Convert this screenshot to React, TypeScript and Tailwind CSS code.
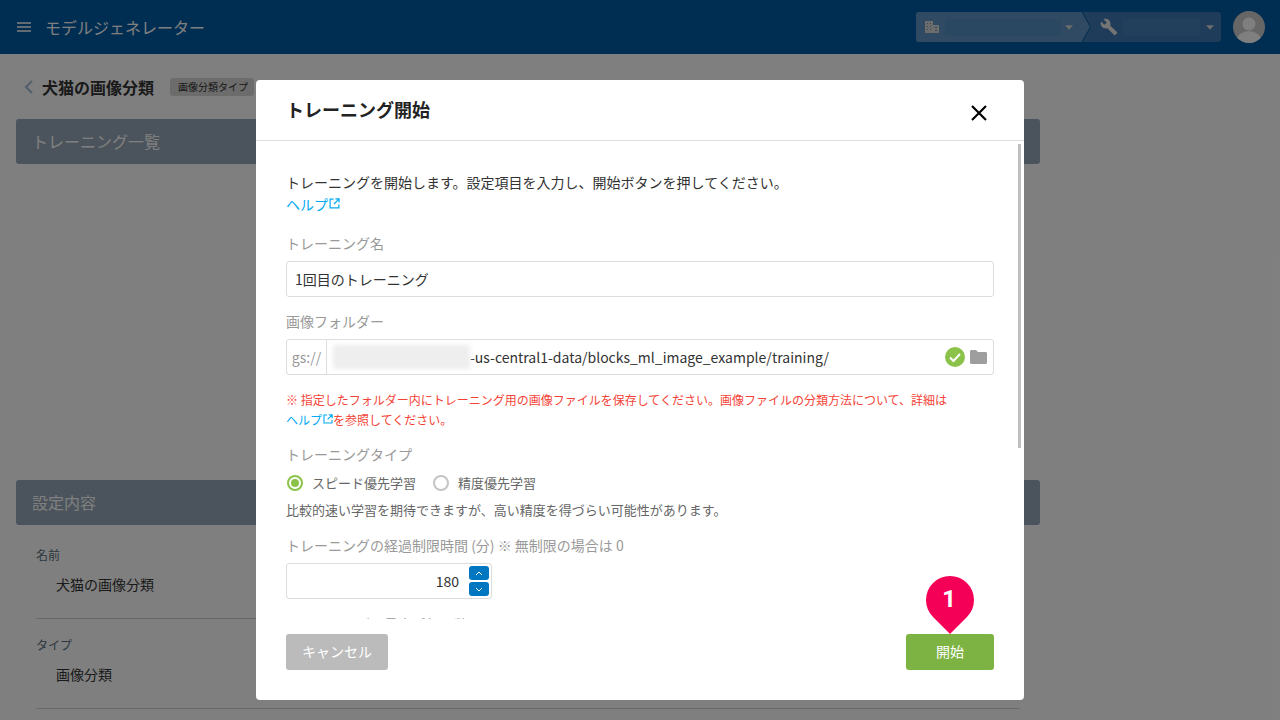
const ExternalIcon = ({ size = 11 }: { size?: number }) => (
  <svg width={size} height={size} viewBox="0 0 12 12" fill="none" stroke="#03a9f4" strokeWidth="1.3" className="ml-px inline-block align-[1px]">
    <path d="M5 1.2H1.2v9.6h9.6V7" />
    <path d="M7 1h4v4M11 1 5.500 6.500" />
  </svg>
);

const Field = ({ label, value }: { label: string; value: string }) => (
  <div className="mx-5 h-[90px] border-b border-[#d0d0d0] pt-[17px]">
    <div className="text-xs leading-[18px] text-[#5a6f80]">{label}</div>
    <div className="mt-[10px] pl-5 text-sm leading-5 text-[#333]">{value}</div>
  </div>
);

const PanelHeader = ({ title }: { title: string }) => (
  <div className="flex h-[45px] items-center rounded-[3px] bg-[#96a8b8] pb-[2px] pl-4 text-base text-white">{title}</div>
);

export default function App() {
  return (
    <div className="relative h-[720px] w-[1280px] overflow-hidden bg-white font-['Noto_Sans_CJK_JP','Noto_Sans',sans-serif]">
      <header className="flex h-[54px] items-center bg-[#005ba4] pl-[17px] pr-[15px] text-white">
        <svg width="14" height="12" viewBox="0 0 14 12" fill="none" stroke="currentColor" strokeWidth="1.4">
          <path d="M0 2h14M0 6h14M0 10h14" />
        </svg>
        <span className="ml-[14px] text-base">モデルジェネレーター</span>
        <div className="ml-auto flex h-[30px] w-[305px] overflow-hidden rounded-[3px] bg-[#3e7ab4]">
          <div className="flex w-[166px] items-center bg-[#5e94c4] pl-[9px]">
            <svg width="14" height="12" viewBox="0 0 14 12" fill="#d8d8d8">
              <path d="M0 0h8v12H0zM8 4h6v8H8z" />
              <path d="M2 2h1v1H2zM5 2h1v1H5zM2 5h1v1H2zM5 5h1v1H5zM2 8h1v1H2zM5 8h1v1H5zM10 6h2v1h-2zM10 9h2v1h-2z" fill="#5e94c4" />
            </svg>
            <div className="ml-[6px] h-[17px] w-[116px] bg-[#5490c4]" />
            <svg width="8" height="5" viewBox="0 0 9 5" fill="#d8d8d8" className="ml-[4px]">
              <path d="M0 0h9L4.500 5z" />
            </svg>
          </div>
          <svg width="10" height="30" viewBox="0 0 10 30" className="shrink-0">
            <path d="M0 0 8.500 15 0 30z" fill="#5e94c4" />
            <path d="M0 0 8.500 15 0 30" fill="none" stroke="#005ba4" strokeWidth="1" />
          </svg>
          <div className="flex flex-1 items-center pl-[8px]">
            <svg width="18" height="18" viewBox="0 0 24 24" fill="#e8e8e8">
              <path d="M22.700 19l-9.100-9.100c.9-2.300.4-5-1.500-6.900-2-2-5-2.400-7.400-1.300L9 6 6 9 1.600 4.700C.4 7.100.9 10.100 2.900 12.100c1.900 1.900 4.600 2.400 6.900 1.500l9.100 9.100c.4.4 1 .4 1.400 0l2.300-2.300c.5-.4.5-1.100.1-1.400z" />
            </svg>
            <div className="ml-[5px] h-[17px] w-[77px] bg-[#4480b8]" />
            <svg width="8" height="5" viewBox="0 0 9 5" fill="#d8d8d8" className="ml-[6px]">
              <path d="M0 0h9L4.500 5z" />
            </svg>
          </div>
        </div>
        <svg width="32" height="32" viewBox="0 0 32 32" className="ml-[12px]">
          <defs>
            <clipPath id="avatar-clip"><circle cx="16" cy="16" r="16" /></clipPath>
          </defs>
          <g clipPath="url(#avatar-clip)">
            <rect width="32" height="32" fill="#cccccc" />
            <circle cx="16" cy="13" r="6.500" fill="#ffffff" />
            <ellipse cx="16" cy="29" rx="12" ry="9" fill="#ffffff" />
          </g>
        </svg>
      </header>

      <main className="w-[1040px] pl-4">
        <div className="flex h-[65px] items-center">
          <svg width="9" height="14" viewBox="0 0 9 14" fill="none" stroke="#a8c0d8" strokeWidth="2.200" className="ml-[8px]">
            <path d="M8 1 2 7l6 6" />
          </svg>
          <h1 className="ml-[9px] text-base font-bold leading-6 text-[#333]">犬猫の画像分類</h1>
          <span className="ml-4 flex h-[18px] w-[84px] items-center justify-center rounded-[3px] bg-[#d8d8d8] pl-[2px] text-[10px] text-[#333]">画像分類タイプ</span>
        </div>
        <PanelHeader title="トレーニング一覧" />
        <div className="h-[316px]" />
        <PanelHeader title="設定内容" />
        <div className="h-1" />
        <Field label="名前" value="犬猫の画像分類" />
        <Field label="タイプ" value="画像分類" />
      </main>

      <div className="absolute inset-0 flex justify-center bg-black/50 pt-[80px]">
        <div className="relative flex h-[620px] w-[768px] flex-col rounded-[4px] bg-white">
          <div className="flex h-[61px] shrink-0 items-center justify-between border-b border-[#dddddd] pl-[30px] pr-[36px]">
            <h2 className="pb-[2px] text-lg font-bold text-[#222]">トレーニング開始</h2>
            <svg width="18" height="18" viewBox="0 0 18 18" fill="none" stroke="#000" strokeWidth="2.200" className="mt-[6px]">
              <path d="M2 2l14 14M16 2 2 16" />
            </svg>
          </div>

          <div className="relative h-[478px] shrink-0 overflow-hidden pl-[30px] pr-[30px] pt-[31px]">
            <div className="absolute right-[3px] top-[3px] h-[304px] w-[3px] bg-[#c0c0c0]" />
            <p className="text-sm leading-[21px] text-[#333]">トレーニングを開始します。設定項目を入力し、開始ボタンを押してください。</p>
            <a className="mt-px block text-sm leading-[21px] text-[#03a9f4]">ヘルプ<ExternalIcon /></a>

            <label className="mt-[18px] block text-sm leading-5 text-[#999]">トレーニング名</label>
            <div className="mt-2 flex h-9 items-center rounded-[3px] border border-[#dddddd] pl-2 text-sm text-[#333]">1回目のトレーニング</div>

            <label className="mt-[14px] block text-sm leading-5 text-[#999]">画像フォルダー</label>
            <div className="mt-2 flex h-9 items-center rounded-[3px] border border-[#dddddd] text-sm text-[#333]">
              <span className="flex h-full w-[40px] items-center justify-center border-r border-[#dddddd] text-[#999]">gs://</span>
              <span className="ml-[6px] h-6 w-[137px] bg-[#eeeeee] blur-[2px]" />
              <span>-us-central1-data/blocks_ml_image_example/training/</span>
              <svg width="20" height="20" viewBox="0 0 20 20" fill="none" className="ml-auto">
                <circle cx="10" cy="10" r="10" fill="#8bc34a" />
                <path d="M5 10.500 8.500 14 15 7" stroke="#fff" strokeWidth="2" />
              </svg>
              <svg width="17" height="14" viewBox="0 0 17 14" fill="#9e9e9e" className="ml-[5px] mr-[6px]">
                <path d="M1.500 0H6l2 2h7.500c.8 0 1.500.7 1.500 1.500v9c0 .8-.7 1.500-1.500 1.500h-14C.7 14 0 13.300 0 12.500v-11C0 .7.700 0 1.500 0z" />
              </svg>
            </div>

            <p className="mt-[15px] text-xs leading-5 text-[#f44336]">
              ※ 指定したフォルダー内にトレーニング用の画像ファイルを保存してください。画像ファイルの分類方法について、詳細は<br />
              <span className="text-[#03a9f4]">ヘルプ<ExternalIcon size={10} /></span>を参照してください。
            </p>

            <label className="mt-[14px] block text-sm leading-5 text-[#999]">トレーニングタイプ</label>
            <div className="mt-[9px] flex h-5 items-center pl-px text-[13px] text-[#666]">
              <span className="flex h-4 w-4 items-center justify-center rounded-full border-2 border-[#8bc34a]">
                <span className="h-2 w-2 rounded-full bg-[#8bc34a]" />
              </span>
              <span className="ml-[9px]">スピード優先学習</span>
              <span className="ml-[17px] h-4 w-4 rounded-full border-2 border-[#c4c4c4]" />
              <span className="ml-[9px]">精度優先学習</span>
            </div>
            <p className="mt-[7px] text-[13px] leading-5 text-[#666]">比較的速い学習を期待できますが、高い精度を得づらい可能性があります。</p>

            <label className="mt-[15px] block text-sm leading-5 text-[#999]">トレーニングの経過制限時間 (分) ※ 無制限の場合は 0</label>
            <div className="mt-[8px] flex h-9 w-[206px] items-center justify-end rounded-[3px] border border-[#dddddd] pr-[2px] text-sm text-[#333]">
              <span className="mr-[10px]">180</span>
              <div className="flex flex-col gap-[2px]">
                <span className="flex h-[14px] w-5 items-center justify-center rounded-[3px] bg-[#0077c0]">
                  <svg width="8" height="5" viewBox="0 0 8 5" fill="none" stroke="#fff" strokeWidth="1"><path d="M1 4l3-3 3 3" /></svg>
                </span>
                <span className="flex h-[14px] w-5 items-center justify-center rounded-[3px] bg-[#0077c0]">
                  <svg width="8" height="5" viewBox="0 0 8 5" fill="none" stroke="#fff" strokeWidth="1"><path d="M1 1l3 3 3-3" /></svg>
                </span>
              </div>
            </div>
            <label className="mt-[15px] block text-sm leading-5 text-[#999]">トレーニングの最大試行回数</label>
          </div>

          <div className="flex flex-1 items-start justify-between px-[30px] pt-[15px]">
            <button className="h-9 w-[102px] rounded-[3px] bg-[#bbbbbb] pb-[2px] text-sm text-white">キャンセル</button>
            <button className="relative h-9 w-[88px] rounded-[3px] bg-[#7cb342] pb-[2px] text-sm text-white">
              開始
              <span className="absolute left-[20px] top-[-58px] flex h-[48px] w-[48px] rotate-45 items-center justify-center rounded-[50%_50%_0_50%] bg-[#f50057]">
                <span className="-translate-x-px -rotate-45 font-['Roboto',sans-serif] text-2xl font-bold leading-none text-white">1</span>
              </span>
            </button>
          </div>
        </div>
      </div>
    </div>
  );
}
